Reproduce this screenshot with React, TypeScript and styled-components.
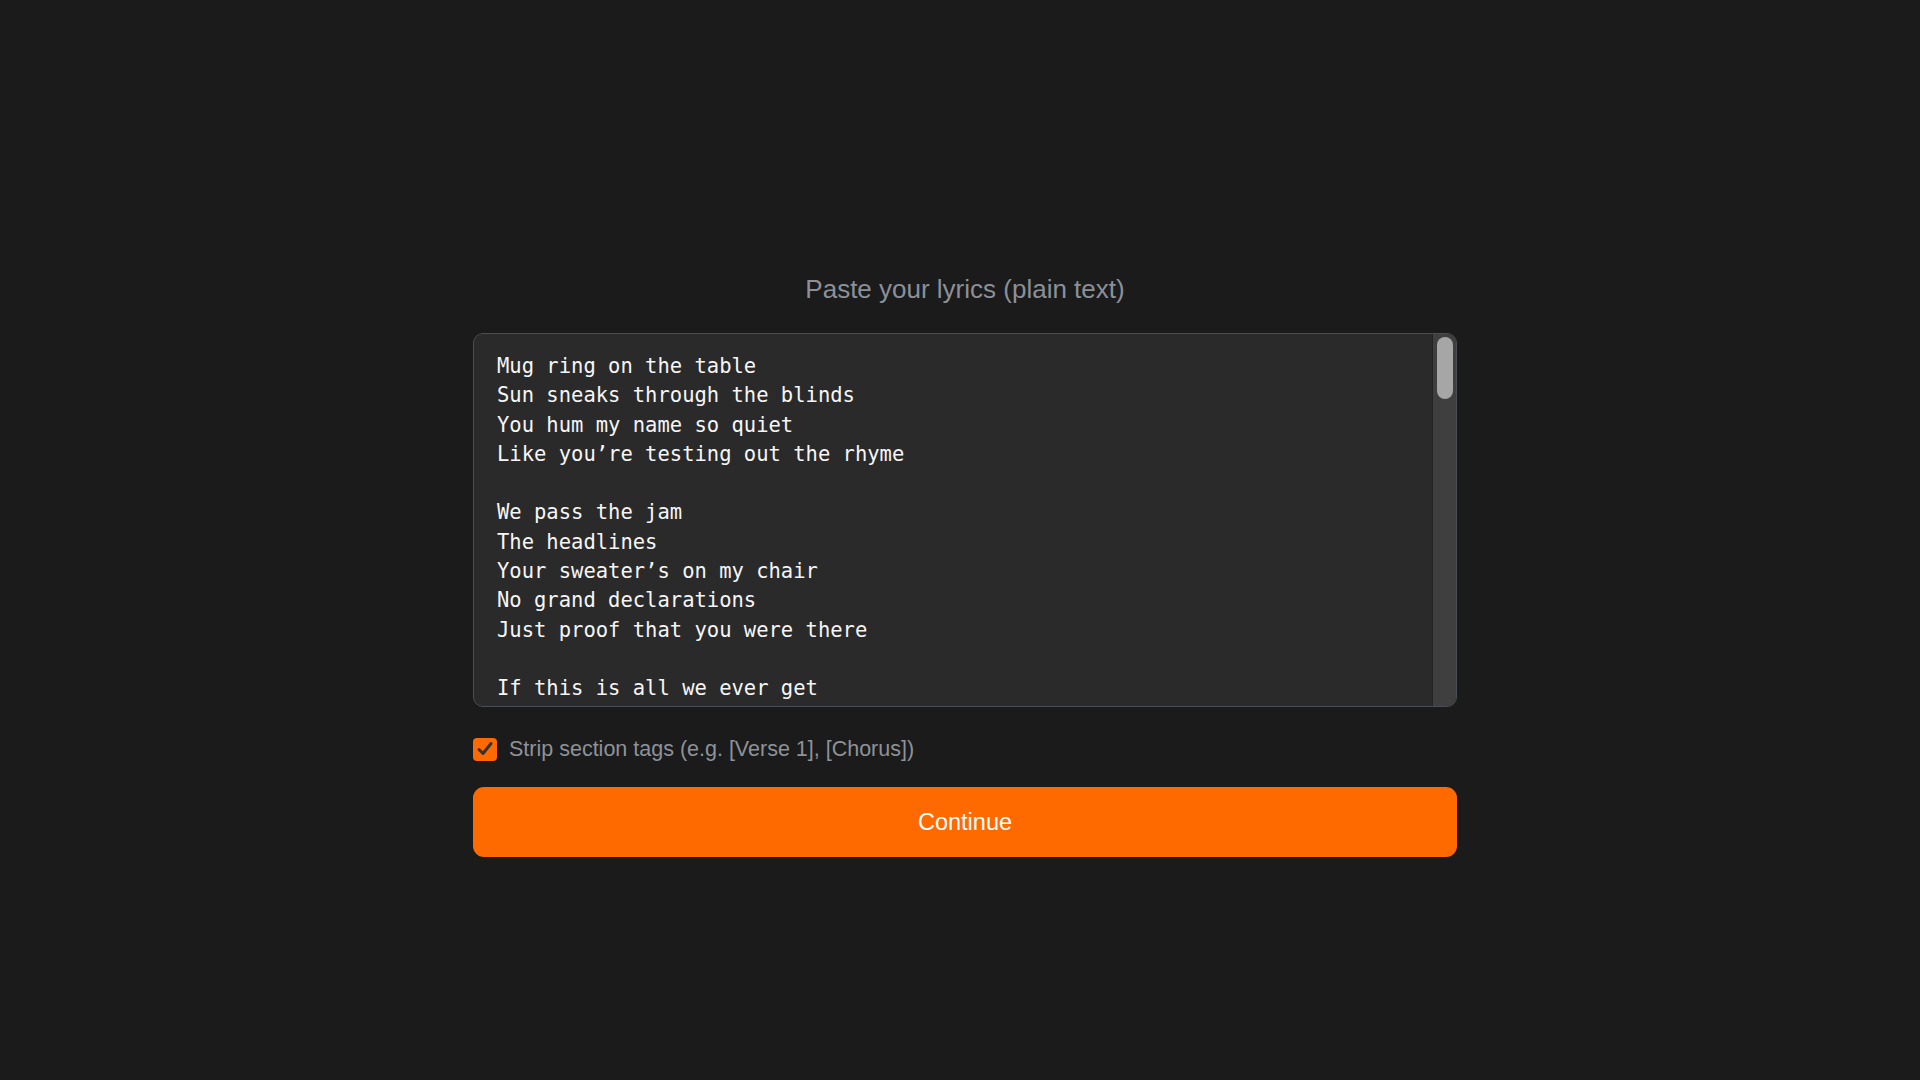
import React, { useState } from "react";
import styled, { createGlobalStyle } from "styled-components";

const GlobalStyle = createGlobalStyle`
  html, body {
    margin: 0;
    padding: 0;
    background: #1b1b1b;
  }
  * {
    box-sizing: border-box;
  }
`;

const LYRICS = `Mug ring on the table
Sun sneaks through the blinds
You hum my name so quiet
Like you’re testing out the rhyme

We pass the jam
The headlines
Your sweater’s on my chair
No grand declarations
Just proof that you were there

If this is all we ever get
A kettle and a crowded sink
Then I don’t need the fireworks
I’ve got more than I think
If this is all we ever get
I’d take it every single day
The ordinary, overtime
The little ways you stay

Keys in the same bowl
Shoes kicked by the door
You steal the warmer pillow
I pretend I’m keeping score

We fight about the thermostat
We laugh about the rain
The grocery list in your handwriting
Says milk, and bread, and again

If this is all we ever get
A kettle and a crowded sink
Then I don’t need the fireworks
I’ve got more than I think
If this is all we ever get
I’d take it every single day
The ordinary, overtime
The little ways you stay

And when the years get heavy
And the mornings come too soon
I’ll still reach for your coffee
And you’ll still hum that tune

No grand declarations
No speeches in the dark
Just a mug ring on the table
Where we left our mark

If this is all we ever get
A kettle and a crowded sink
Then I don’t need the fireworks
I’ve got more than I think
If this is all we ever get
I’d take it every single day
The ordinary, overtime
The little ways you stay

The little ways you stay
The little ways you stay
Mug ring on the table
Sun sneaks through the blinds`;

const RAIL_INSET = 8;
const THUMB_HEIGHT = 62;

export default function App() {
  const [text, setText] = useState(LYRICS);
  const [strip, setStrip] = useState(true);
  const [thumbTop, setThumbTop] = useState(0);

  // keep the custom rail in step with the textarea's scroll position
  const onScroll = (e: React.UIEvent<HTMLTextAreaElement>) => {
    const el = e.currentTarget;
    const range = el.scrollHeight - el.clientHeight;
    const travel = el.clientHeight - RAIL_INSET - THUMB_HEIGHT;
    setThumbTop(range > 0 ? (el.scrollTop / range) * travel : 0);
  };

  return (
    <Page>
      <GlobalStyle />
      <Panel>
        <Heading>Paste your lyrics (plain text)</Heading>
        <EditorFrame>
          <LyricsInput
            value={text}
            spellCheck={false}
            onChange={(e) => setText(e.target.value)}
            onScroll={onScroll}
          />
          <ScrollRail>
            <ScrollThumb style={{ transform: `translateY(${thumbTop}px)` }} />
          </ScrollRail>
        </EditorFrame>
        <OptionRow>
          <HiddenCheck
            type="checkbox"
            checked={strip}
            onChange={(e) => setStrip(e.target.checked)}
          />
          <CheckBox $checked={strip}>
            {strip && (
              <svg width="20" height="20" viewBox="0 0 20 20" fill="none">
                <path
                  d="M4 10.5 L8 14.5 L16 4.5"
                  stroke="#333333"
                  strokeWidth="3"
                  strokeLinecap="round"
                  strokeLinejoin="round"
                />
              </svg>
            )}
          </CheckBox>
          <OptionText>Strip section tags (e.g. [Verse 1], [Chorus])</OptionText>
        </OptionRow>
        <PrimaryButton type="button">Continue</PrimaryButton>
      </Panel>
    </Page>
  );
}

const Page = styled.div`
  min-height: 100vh;
  display: flex;
  justify-content: center;
  padding: 274px 0 0 10px;
  font-family: "Liberation Sans", Arial, sans-serif;
`;

const Panel = styled.div`
  width: 984px;
  display: flex;
  flex-direction: column;
`;

const Heading = styled.h2`
  margin: 0 0 28px;
  text-align: center;
  font-size: 26px;
  line-height: 31px;
  font-weight: 400;
  color: #8c9098;
`;

const EditorFrame = styled.div`
  display: flex;
  height: 374px;
  border: 1px solid #4a4d55;
  border-radius: 10px;
  background: #2a2a2a;
  overflow: hidden;
`;

const LyricsInput = styled.textarea`
  flex: 1;
  min-width: 0;
  height: 100%;
  margin: 0;
  padding: 18px 22px 17px 23px;
  resize: none;
  outline: none;
  border: none;
  background: transparent;
  color: #f6f6f6;
  font-family: "DejaVu Sans Mono", "Liberation Mono", monospace;
  font-size: 20.5px;
  line-height: 29.3px;
  overflow-y: scroll;
  scrollbar-width: none;

  &::-webkit-scrollbar {
    display: none;
  }
`;

const ScrollRail = styled.div`
  flex: none;
  width: 24px;
  padding: 3px 3px 0 4px;
  background: #3f3f3f;
  border-left: 1px solid #232323;
`;

const ScrollThumb = styled.div`
  height: ${THUMB_HEIGHT}px;
  border-radius: 9px;
  background: #a6a6a6;
`;

const OptionRow = styled.label`
  position: relative;
  display: flex;
  align-items: center;
  gap: 12px;
  margin-top: 30px;
  height: 24px;
  cursor: pointer;
`;

const HiddenCheck = styled.input`
  position: absolute;
  opacity: 0;
  width: 0;
  height: 0;
  margin: 0;
`;

const CheckBox = styled.span<{ $checked: boolean }>`
  flex: none;
  width: 24px;
  height: 23px;
  border-radius: 4px;
  display: flex;
  align-items: center;
  justify-content: center;
  background: ${(p) => (p.$checked ? "#ff6a00" : "#2a2a2a")};
  border: ${(p) => (p.$checked ? "none" : "1px solid #4a4d55")};
`;

const OptionText = styled.span`
  font-size: 21.5px;
  color: #8e9299;
  white-space: nowrap;
`;

const PrimaryButton = styled.button`
  margin-top: 26px;
  height: 70px;
  width: 100%;
  border: none;
  border-radius: 11px;
  background: #ff6a00;
  color: #ffffff;
  font-family: "Liberation Sans", Arial, sans-serif;
  font-size: 23.5px;
  cursor: pointer;
`;
